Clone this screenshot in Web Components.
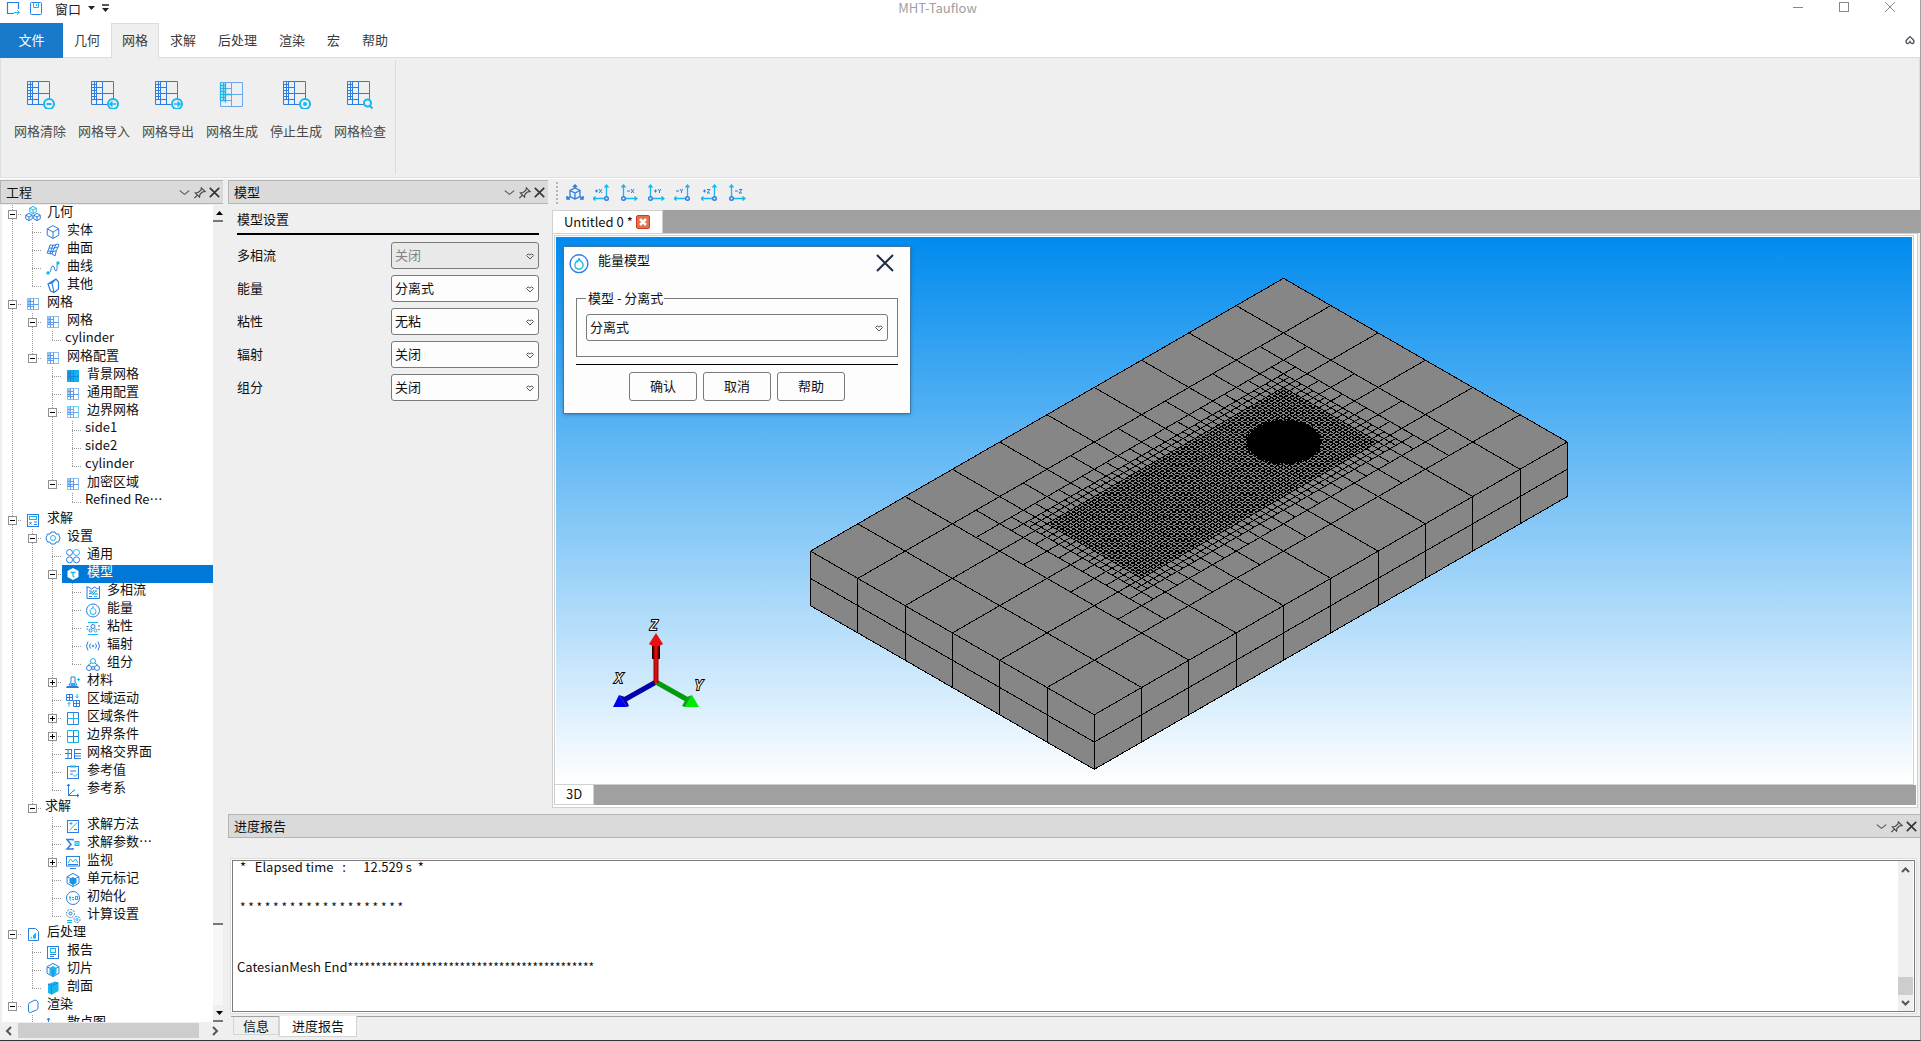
<!DOCTYPE html>
<html lang="zh-CN">
<head>
<meta charset="utf-8">
<title>MHT-Tauflow</title>
<style>
html,body{height:100%;margin:0}
body{font:13px/18px "Noto Sans CJK SC","Noto Sans",sans-serif;color:#111;background:#efefef;overflow:hidden}
</style>
</head>
<body>
<app-window>
  <title-bar slot="title" caption="MHT-Tauflow"></title-bar>
  <ribbon-tabs slot="tabs"></ribbon-tabs>
  <ribbon-bar slot="ribbon">
    <ribbon-tool icon="clear" label="网格清除"></ribbon-tool>
    <ribbon-tool icon="import" label="网格导入"></ribbon-tool>
    <ribbon-tool icon="export" label="网格导出"></ribbon-tool>
    <ribbon-tool icon="generate" label="网格生成"></ribbon-tool>
    <ribbon-tool icon="stop" label="停止生成"></ribbon-tool>
    <ribbon-tool icon="check" label="网格检查"></ribbon-tool>
  </ribbon-bar>

  <dock-panel slot="project" heading="工程">
    <tree-view>
      <tree-item label="几何" icon="cubes" open>
        <tree-item label="实体" icon="cube"></tree-item>
        <tree-item label="曲面" icon="surface"></tree-item>
        <tree-item label="曲线" icon="curve"></tree-item>
        <tree-item label="其他" icon="other"></tree-item>
      </tree-item>
      <tree-item label="网格" icon="mesh" open>
        <tree-item label="网格" icon="mesh" open>
          <tree-item label="cylinder"></tree-item>
        </tree-item>
        <tree-item label="网格配置" icon="mesh" open>
          <tree-item label="背景网格" icon="meshfull"></tree-item>
          <tree-item label="通用配置" icon="mesh"></tree-item>
          <tree-item label="边界网格" icon="meshedge" open>
            <tree-item label="side1"></tree-item>
            <tree-item label="side2"></tree-item>
            <tree-item label="cylinder"></tree-item>
          </tree-item>
          <tree-item label="加密区域" icon="mesh" open>
            <tree-item label="Refined Re…"></tree-item>
          </tree-item>
        </tree-item>
      </tree-item>
      <tree-item label="求解" icon="calc" open>
        <tree-item label="设置" icon="gear" open>
          <tree-item label="通用" icon="clover"></tree-item>
          <tree-item label="模型" icon="model" open selected>
            <tree-item label="多相流" icon="phase"></tree-item>
            <tree-item label="能量" icon="energy"></tree-item>
            <tree-item label="粘性" icon="viscous"></tree-item>
            <tree-item label="辐射" icon="radiation"></tree-item>
            <tree-item label="组分" icon="species"></tree-item>
          </tree-item>
          <tree-item label="材料" icon="material" closed></tree-item>
          <tree-item label="区域运动" icon="motion"></tree-item>
          <tree-item label="区域条件" icon="zone" closed></tree-item>
          <tree-item label="边界条件" icon="boundary" closed></tree-item>
          <tree-item label="网格交界面" icon="interface"></tree-item>
          <tree-item label="参考值" icon="refvalue"></tree-item>
          <tree-item label="参考系" icon="refframe"></tree-item>
        </tree-item>
        <tree-item label="求解" open>
          <tree-item label="求解方法" icon="method"></tree-item>
          <tree-item label="求解参数…" icon="sigma"></tree-item>
          <tree-item label="监视" icon="monitor" closed></tree-item>
          <tree-item label="单元标记" icon="cellmark"></tree-item>
          <tree-item label="初始化" icon="init"></tree-item>
          <tree-item label="计算设置" icon="gears"></tree-item>
        </tree-item>
      </tree-item>
      <tree-item label="后处理" icon="post" open>
        <tree-item label="报告" icon="report"></tree-item>
        <tree-item label="切片" icon="slice"></tree-item>
        <tree-item label="剖面" icon="section"></tree-item>
      </tree-item>
      <tree-item label="渲染" icon="render" open>
        <tree-item label="散点图" icon="refframe"></tree-item>
      </tree-item>
    </tree-view>
  </dock-panel>

  <dock-panel slot="settings" heading="模型">
    <model-settings>
      <form-row label="多相流" value="关闭" disabled></form-row>
      <form-row label="能量" value="分离式"></form-row>
      <form-row label="粘性" value="无粘"></form-row>
      <form-row label="辐射" value="关闭"></form-row>
      <form-row label="组分" value="关闭"></form-row>
    </model-settings>
  </dock-panel>

  <scene-view slot="scene">
    <mesh-scene></mesh-scene>
    <energy-dialog slot="window"></energy-dialog>
  </scene-view>

  <dock-panel slot="report" heading="进度报告">
    <log-view></log-view>
  </dock-panel>
</app-window>

<script>
const B = '#2b7de0', C = '#14b8ee';
const smallMesh = (o, i, f) => `<rect x="2.5" y="2.5" width="11" height="11" fill="${f}" stroke="${o}"/><path d="M8.5 2.5v11M8.5 8.5h5M2.5 10.5h6M5.5 2.5v11M2.5 5.5h6M2.5 8.5h6" stroke="${i}" fill="none"/><path d="M3 3h2v7H3z" fill="${i}" opacity=".6"/>`;
const bigMesh = (a, b) => `<path d="M.5 .5h22v23H.5zM11.5 .5v23M11.5 12.5h11" stroke="${a}"/><path d="M3.5 .5v18M5.5 .5v23M.5 3.5h5M.5 6.5h11M.5 9.5h5M.5 12.5h11M.5 15.5h5M.5 18.5h11" stroke="${b}"/>`;
const badge = p => `<circle cx="22" cy="23" r="5" fill="#efefef" stroke="${C}" stroke-width="2"/>${p}`;
const axis = (dir, lab) => {
  const x = dir > 0 ? 3.5 : 13.5, e = dir > 0 ? 17 : 0, s = dir;
  return `<path d="M${x} 13V1M${x - 2} 3.5L${x} 1l2 2.500M${x} 14.500H${e}M${e - 2.5 * s} 12.500L${e} 14.500l${-2.5 * s} 2" stroke="${C}" stroke-width="1.300"/><circle cx="${x}" cy="14.500" r="1.800" fill="#efefef" stroke="${B}" stroke-width="1.400"/>` + axisGlyph[lab](dir > 0 ? 7 : 2);
};
const axisGlyph = {
  '+X': x => `<path d="M${x} 7h3M${x + 1.5} 5.500v3M${x + 4} 5l3 4M${x + 7} 5l-3 4" stroke="${B}"/>`,
  '-X': x => `<path d="M${x} 7h3M${x + 4} 5l3 4M${x + 7} 5l-3 4" stroke="${B}"/>`,
  '+Y': x => `<path d="M${x} 7h3M${x + 1.5} 5.500v3M${x + 4} 5l1.500 2v2M${x + 7} 5l-1.500 2" stroke="${B}"/>`,
  '-Y': x => `<path d="M${x} 7h3M${x + 4} 5l1.500 2v2M${x + 7} 5l-1.500 2" stroke="${B}"/>`,
  '+Z': x => `<path d="M${x} 7h3M${x + 1.5} 5.500v3M${x + 4} 5.500h3l-3 3.500h3" stroke="${B}"/>`,
  '-Z': x => `<path d="M${x} 7h3M${x + 4} 5.500h3l-3 3.500h3" stroke="${B}"/>`
};
const iso = (x, y, r, c) => `<path d="M${x} ${y - r}l${r * .9} ${r / 2}v${r}l${-r * .9} ${r / 2}l${-r * .9} ${-r / 2}v${-r}zM${x - r * .9} ${y - r / 2}L${x} ${y}l${r * .9} ${-r / 2}M${x} ${y}v${r}" stroke="${c}"/>`;
const ICONS = {
  cubes: iso(8, 4, 3.6, C) + iso(4, 11, 3.6, B) + iso(12, 11, 3.6, B),
  cube: iso(8, 8, 6.4, B),
  surface: `<path d="M5 3q4 1 8-1l1 1q-3 5-4 11l-3-2-5-1q2-4 3-8zM4 6q4 1 9-1M3 9q4 1 8 0M8 3q-2 5-3 9M11 2.500Q8 7 7 12" stroke="${B}"/>`,
  curve: `<path d="M3 13c4 0 2-7 5-7 2 0 1 5 3 5s0-7 2-8" stroke="${B}"/><circle cx="3" cy="13" r="1.700" fill="${C}"/><circle cx="13" cy="3" r="1.700" fill="${C}"/>`,
  other: `<path d="M6 4l5-3 2.500 3v7L9 14.500 5.500 13 3 6zM3 6l4-1 2 9.500M7 5l4-4" stroke="${B}" stroke-width="1.200"/>`,
  mesh: smallMesh('#8fbdf2', '#5a9cea', '#fff'),
  meshedge: smallMesh('#6fd6f5', '#6fa9ec', '#fff'),
  meshfull: smallMesh('#0fa9ec', '#1685dc', '#0fb4ef'),
  calc: `<rect x="2.500" y="2.500" width="11" height="12" stroke="${B}"/><rect x="4.500" y="4.500" width="7" height="3" stroke="${C}"/><path d="M4.500 10l2 2.500M6.500 10l-2 2.500M9 10h3M9 12.500h3" stroke="${B}"/>`,
  gear: `<path d="M6 2h4l1 2h2.500L15 8l-1.500 4H11l-1 2H6l-1-2H2.500L1 8l1.500-4H5z" stroke="${B}"/><circle cx="8" cy="8" r="2.500" stroke="${C}"/>`,
  clover: `<circle cx="4.500" cy="4.500" r="3" stroke="${B}"/><circle cx="11.500" cy="4.500" r="3" stroke="${C}"/><circle cx="4.500" cy="11.800" r="3" stroke="${B}"/><circle cx="11.500" cy="11.800" r="3" stroke="${B}"/>`,
  model: `<path d="M8 2l5.500 3v6L8 14l-5.500-3V5z" fill="#fff"/><path d="M5.500 6.500h5M8 6.500v3q0 1.500 1.500 1.500" stroke="${C}" stroke-width="1.300"/>`,
  phase: `<path d="M2 2v12.500h12.500V2" stroke="${B}"/><path d="M2 4q2-2 3 0t3 0 3 0 3 0M4 7h3M10 7h2M4 10l3-1 2-3M8 10h5M4 12.500h3" stroke="${B}"/><path d="M5 8.500l3 2 3-4M9 12.500h3" stroke="${C}"/>`,
  energy: `<circle cx="8" cy="8.500" r="6.500" stroke="${B}"/><path d="M8 4.500c0 2 3 2.500 3 5a3 3 0 01-6 0c0-1.500 1-2 1.500-3 .5 1 1 .5 1.500-2z" stroke="${C}"/>`,
  viscous: `<path d="M3 2.500h10M3 14.500h10" stroke="${C}"/><circle cx="8" cy="6.500" r="2" stroke="${B}"/><circle cx="5.500" cy="10.500" r="1.500" stroke="${B}"/><circle cx="10.500" cy="10.500" r="1.500" stroke="${C}"/><path d="M1.500 6.500h2M13 6h2M1.500 9h1.500M13 9.500h1.500" stroke="${B}"/>`,
  radiation: `<path d="M3 3.500q-3 4.500 0 9M5.500 5.500q-2 2.500 0 5M13 3.500q3 4.500 0 9M10.500 5.500q2 2.500 0 5" stroke="${B}"/><circle cx="8" cy="8" r="1.200" fill="${C}"/>`,
  species: `<circle cx="8" cy="5" r="2.500" stroke="${C}"/><path d="M6 7L3 9.500M10 7l3 2.500" stroke="${B}"/><circle cx="4" cy="12" r="2.500" stroke="${B}"/><circle cx="12" cy="12" r="2.500" stroke="${B}"/><circle cx="8" cy="12" r="1.500" stroke="${B}"/>`,
  material: `<path d="M6 3h4v5l2 3H4l2-3z" stroke="${B}"/><path d="M2 12h11l1 2H1z" fill="${B}"/><path d="M6 9h4v3H6z" fill="${C}"/><path d="M12 5.500h3M13.500 4v3" stroke="${C}"/>`,
  motion: `<path d="M1.500 2.500h6v6h-6zM4.500 2.500v6M1.500 5.500h6M8.500 8.500h6v6h-6zM11.500 8.500v6M8.500 11.500h6" stroke="${B}"/><path d="M12 2v4M10.500 4.500L12 6l1.500-1.500M4 14.500v-4M2.500 12L4 10.500 5.500 12" stroke="${C}"/>`,
  zone: `<path d="M2.500 2.500h11v12h-11z" stroke="${B}"/><path d="M8.500 2.500v12M2.500 8.500h11" stroke="${C}"/>`,
  boundary: `<path d="M2.500 2.500h11v12h-11z" stroke="${C}"/><path d="M8.500 2.500v12M2.500 8.500h11" stroke="${B}"/>`,
  interface: `<path d="M0 3.500h7M0 7.500h7M0 12.500h7M3 3v10M6.500 3v10M9.500 3v10M9.500 3.500H16M9.500 7.500H16M9.500 12.500H16M9.500 10H16" stroke="${B}"/>`,
  refvalue: `<rect x="2.500" y="2.500" width="11" height="12" stroke="${B}"/><path d="M5 2.500h6" stroke="${C}" stroke-width="2"/><path d="M5 7h6M5 10h3" stroke="${B}"/><path d="M8.500 11l1.500 1.500 3-3" stroke="${C}"/>`,
  refframe: `<path d="M3.500 2v11.500H14M2 4l1.500-2L5 4M12 12l2 1.500-2 1.500M3.500 13.500L8 9" stroke="${B}"/><circle cx="9" cy="8.500" r="1" fill="${C}"/>`,
  method: `<rect x="2.500" y="2.500" width="11" height="12" stroke="${B}"/><path d="M12 4.500L4.500 12.500M4.500 5.500h3M6 4v3" stroke="${C}"/><path d="M9 11.500h3" stroke="${B}"/>`,
  sigma: `<path d="M8 4.500V3.500H2l4 5-4 4.500h6v-1" stroke="${B}" stroke-width="1.500"/><path d="M10 5.500h4v4h-4zM10 5.500l4 4M14 5.500l-4 4" stroke="${C}"/>`,
  monitor: `<rect x="1.500" y="2.500" width="13" height="9.500" stroke="${B}"/><path d="M3 9l2.500-4L8 8l2.500-3L13 9" stroke="${C}"/><path d="M5 14.500h6M3 10.500h10" stroke="${B}"/>`,
  cellmark: iso(8, 8, 6.6, B) + `<path d="M8 5l3.500 2v4L8 13l-3.500-2V7z" fill="#1596e6"/>`,
  init: `<circle cx="8" cy="8" r="6.500" stroke="${B}"/><path d="M5 6v4h1M4 7.500h2M7 7.500h2M7 9.500h2" stroke="${C}"/><rect x="10.500" y="6.500" width="2" height="3" stroke="${C}"/>`,
  gears: `<circle cx="5.500" cy="5.500" r="4" stroke="${B}" stroke-dasharray="2 1"/><circle cx="5.500" cy="5.500" r="1.500" stroke="${B}"/><circle cx="12" cy="11.500" r="3" stroke="${B}" stroke-dasharray="2 1"/><circle cx="12" cy="11.500" r="1" stroke="${C}"/><path d="M2 12.500h5M2 14.500h5" stroke="${C}"/>`,
  post: `<path d="M3.500 2.500h7l3 3v9h-10z" stroke="${B}"/><path d="M5 12.500l6-6v6z" fill="${C}"/><path d="M7.500 6.500v6" stroke="#fff"/>`,
  report: `<rect x="2.500" y="2.500" width="11" height="12" stroke="${B}"/><rect x="5.500" y="4.500" width="5" height="4" stroke="${C}"/><path d="M5 10.500h6M5 12.500h4" stroke="${B}"/>`,
  slice: iso(8, 8, 6.6, B) + `<path d="M4.500 6L8 8v6l-3.500-2zM8 8l3.500-2v6L8 14zM8 4l3.500 2L8 8 4.500 6z" fill="${C}"/><path d="M8 8v6" stroke="${B}"/>`,
  section: `<path d="M3 4l7-2.500 3.500 1V11L7 14.500 3 13z" fill="${C}"/><path d="M3 4l3.500 1.500L13 3M6.500 5.500v9" stroke="${B}"/>`,
  render: `<path d="M3.500 6.500Q3.500 5 5 4.500l5-2.500q1 0 2 1l1 1v6q0 1.500-1.500 2l-6 2.500q-2 0-2-1.500z" stroke="${B}"/>`,
  qnew: `<path d="M9 13.500H2.500v-11h11V9" stroke="${B}" stroke-width="1.200"/><path d="M9 12.500h5M12 10.500l2.500 2-2.500 2" stroke="${C}"/>`,
  qsave: `<rect x="2.500" y="2.500" width="11" height="12" stroke="${B}" rx="1"/><path d="M5.500 2.500v5h5v-5M8.500 4v2" stroke="${C}"/>`,
  isoview: `<path d="M9 4l5 2.500v6L9 15l-5-2.500v-6zM4 6.500L9 9l5-2.500M9 9v6" stroke="${B}" stroke-width="1.300"/><path d="M9 4V1M7 3l2-2 2 2M4 12.500l-3 2.500M1 12v3h3M14 12.500l3 2.500M17 12v3h-3" stroke="${B}" stroke-width="1.500"/>`,
  vpx: axis(-1, '+X'), vmx: axis(1, '-X'), vpy: axis(1, '+Y'), vmy: axis(-1, '-Y'), vpz: axis(-1, '+Z'), vmz: axis(1, '-Z'),
  clear: bigMesh(B, B) + badge(`<path d="M19.500 23h5" stroke="${C}" stroke-width="2"/>`),
  import: bigMesh(B, B) + badge(`<path d="M19 23h6M21.500 20.500L19 23l2.500 2.500" stroke="${C}" stroke-width="1.500"/>`),
  export: bigMesh(B, B) + badge(`<path d="M19 23h6M22.500 20.500L25 23l-2.500 2.500" stroke="${C}" stroke-width="1.500"/>`),
  stop: bigMesh(B, B) + badge(`<circle cx="22" cy="23" r="2" fill="${C}"/>`),
  generate: `<g transform="translate(1 1)"><path d="M11.500 .5h11v24H.5V.5zM11.500 .5v24M11.500 12.500h11M5.500 6.500h6M5.500 18.500h6" stroke="#6aa7ee"/><path d="M3.500 .5v18M5.500 .5v20M.5 .5v18M.5 3.500h5M.5 6.500h6M.5 9.500h5M.5 12.500h11M.5 15.500h5M.5 18.500h5" stroke="${C}" stroke-width="1.300"/></g>`,
  check: bigMesh(B, B) + `<circle cx="20.500" cy="22" r="3.500" fill="#efefef" stroke="${C}" stroke-width="2"/><path d="M23 25l2.500 2.500" stroke="${C}" stroke-width="2"/>`,
  down: `<path d="M3 6l5 4 5-4" stroke="#555" stroke-width="1.200"/>`,
  pin: `<path d="M10 3l4 4-3 .5-2.500 2.500-.5 3-4.500-4.500 3-.5L9.500 5.500zM6 10.500L2.500 14" stroke="#444" stroke-width="1.200"/>`,
  close: `<path d="M3 3l10 10M13 3L3 13" stroke="#333" stroke-width="1.700"/>`,
  heart: `<path d="M4.500 7.500Q6 4.500 8 7q2-2.500 3.500 .5L8 11z" stroke="#555b66"/>`
};
const svg = (n, w = 16, vb = 16) => `<svg width="${w}" height="${w}" viewBox="0 0 ${vb} ${vb}" fill="none" aria-hidden="true">${ICONS[n]}</svg>`;

const define = (name, render) => customElements.define(name, class extends HTMLElement {
  connectedCallback() {
    if (this.shadowRoot) return;
    const root = this.attachShadow({ mode: 'open' });
    const t = document.createElement('template');
    t.innerHTML = `<style>:host,*{box-sizing:border-box}button,select{font:inherit;color:inherit;margin:0}svg{display:block;flex:none}.bare{border:0;padding:0;background:none;display:grid;place-items:center}</style>` + render(this);
    root.append(t.content.cloneNode(true));
  }
});

define('app-window', () => `<style>
:host{display:flex;flex-direction:column;height:100vh;border-right:1px solid #a0a0a0;border-bottom:1px solid #2b333b;background:#efefef}
.work{flex:1;min-height:0;display:flex;gap:5px;padding-top:1px;border-top:1px solid #fff}
.left{width:223px;display:flex;flex:none}
.main{flex:1;min-width:0;display:flex;flex-direction:column;gap:6px}
.top{flex:1;min-height:0;display:flex;gap:4px}
.set{width:320px;flex:none;display:flex}
::slotted([slot=scene]),::slotted([slot=project]),::slotted([slot=settings]){flex:1;min-width:0}
</style>
<slot name="title"></slot><slot name="tabs"></slot><slot name="ribbon"></slot>
<div class="work"><div class="left"><slot name="project"></slot></div>
<div class="main"><div class="top"><div class="set"><slot name="settings"></slot></div><slot name="scene"></slot></div><slot name="report"></slot></div></div>`);

define('title-bar', el => `<style>
:host{display:flex;height:23px;background:#fff}
.side{flex:1;display:flex;align-items:flex-start}
.quick{padding-left:5px;gap:7px}
.quick button{height:16px}
.menu{display:flex;align-items:center;gap:7px;padding-left:4px;color:#222}
h1{margin:0 28px 0 0;font-size:13px;font-weight:400;line-height:16px;color:#a0a0a0}
.win{justify-content:flex-end;padding-right:22px;gap:30px}
</style>
<div class="side quick"><button class="bare" aria-label="新建">${svg('qnew')}</button><button class="bare" aria-label="保存">${svg('qsave')}</button><div class="menu"><button class="bare">窗口</button><svg width="7" height="4"><path d="M0 0h7L3.500 4z" fill="#222"/></svg><svg width="7" height="8"><path d="M0 1h7" stroke="#222" stroke-width="1.500"/><path d="M0 4h7L3.500 8z" fill="#222"/></svg></div></div>
<h1>${el.getAttribute('caption')}</h1>
<div class="side win"><button class="bare" aria-label="最小化"><svg width="16" height="15"><path d="M3 7.500h10" stroke="#888"/></svg></button><button class="bare" aria-label="最大化"><svg width="16" height="15" fill="none"><rect x="3.500" y="2.500" width="9" height="9" stroke="#888"/></svg></button><button class="bare" aria-label="关闭"><svg width="16" height="15"><path d="M3 2l10 10M13 2L3 12" stroke="#888"/></svg></button></div>`);

define('ribbon-tabs', () => `<style>
:host{display:flex;height:35px;background:linear-gradient(#dcdcdc,#dcdcdc) bottom/100% 1px no-repeat #fff;color:#3b3b3b}
button{border:1px solid transparent;border-bottom:0;background:none;padding:0 10px 3px;height:35px}
.file{background:#1979ca;color:#fff;width:63px;padding:0 0 2px;border:0}
.on{background:#efefef;border-color:#dcdcdc}
.fold{margin-left:auto;padding:0 1px 3px}
</style><button class="file">文件</button>${['几何', '网格', '求解', '后处理', '渲染', '宏', '帮助'].map(t => `<button${t === '网格' ? ' class="on"' : ''}>${t}</button>`).join('')}<button class="fold" aria-label="折叠"><svg width="16" height="16" fill="none"><path d="M5 11.500Q3 9.500 5 7.500L8 4.500l3 3q2 2 0 4Q9 12 8 9.500 7 12 5 11.500z" stroke="#444b57" stroke-width="1.200"/></svg></button>`);

define('ribbon-bar', () => `<style>
:host{display:flex;height:120px;border:1px solid #dfdfdf;border-top:0;padding:2px 0 3px 7px}
div{display:flex;padding-right:3px;border-right:1px solid #dcdcdc}
</style><div><slot></slot></div>`);

define('ribbon-tool', el => `<style>
:host{display:block;width:64px}
button{width:100%;border:0;background:none;padding:21px 0 0 0;display:flex;flex-direction:column;align-items:center;color:#4a4a4a;gap:13px;white-space:nowrap}
svg{margin-left:2px}
</style><button>${svg(el.getAttribute('icon'), 28, 28)}<span>${el.getAttribute('label')}</span></button>`);

define('dock-panel', el => `<style>
:host{display:flex;flex-direction:column;min-width:0}
header{flex:none;height:24px;display:flex;align-items:center;background:#dadada;border:1px solid #b4b4b4;border-right:0;padding:0 1px 0 5px}
h2{flex:1;margin:0;font-size:13px;font-weight:400;line-height:20px;padding-bottom:1px}
button{width:15px;height:20px}
svg{width:15px;height:15px}
</style><header><h2>${el.getAttribute('heading')}</h2><button class="bare" aria-label="菜单">${svg('down')}</button><button class="bare" aria-label="固定">${svg('pin')}</button><button class="bare" aria-label="关闭">${svg('close')}</button></header><slot></slot>`);

define('tree-view', () => `<style>
:host{flex:1;min-height:0;display:flex;flex-direction:column;padding:1px 0 2px 2px}
.body{flex:1;min-height:0;display:flex}
.list{flex:1;background:#fff;overflow:hidden}
.v{width:10px;display:flex;flex-direction:column;background:repeating-conic-gradient(#fff 0 25%,#eee 0 50%) 0/2px 2px}
.v i,.v b{background:#efefef;border-bottom:2px solid #777;display:flex;justify-content:flex-end;align-items:center;overflow:hidden}
.v b{height:17px;flex:none}.v i{flex:1}.v u{height:80px}
.h{height:16px;flex:none;display:flex;align-items:center;padding-top:1px}
.h span{flex:1;display:flex;height:15px}
.h span b{width:96%;background:#cdcdcd;min-width:0}
</style><div class="body"><div class="list" role="tree"><slot></slot></div>
<div class="v"><b><svg width="7" height="4"><path d="M0 4h7L3.500 0z"/></svg></b><i></i><u></u><b><svg width="7" height="4"><path d="M0 0h7L3.500 4z"/></svg></b></div></div>
<div class="h"><svg width="16" height="14" fill="none"><path d="M9 3L5 7l4 4" stroke="#555" stroke-width="2"/></svg><span><b></b></span><svg width="16" height="14" fill="none"><path d="M6 3l4 4-4 4" stroke="#555" stroke-width="2"/></svg></div>`);

define('tree-item', el => {
  const a = n => el.getAttribute(n), has = n => el.hasAttribute(n);
  const ex = has('open') ? '<path d="M2 4.500h5" stroke="#000"/>' : '<path d="M2 4.500h5M4.500 2v5" stroke="#000"/>';
  return `<style>
:host{display:block;background:repeating-linear-gradient(#999 0 1px,transparent 0 2px) 10px 0/1px 100% no-repeat}
:host(:last-child){background-size:1px 9px}
.row{display:flex;height:18px}
.join{width:20px;flex:none;display:flex;align-items:center;background:repeating-linear-gradient(90deg,#999 0 1px,transparent 0 2px) 10px 9px/10px 1px no-repeat}
.join button{width:9px;height:9px;margin-left:6px;background:#fff}
.cell{flex:1;min-width:0;display:flex}
:host([selected]) .cell{background:#0078d7;color:#fff}
.ico{width:22px;display:grid;place-items:center;flex:none}
.txt{line-height:12px;padding-left:3px;white-space:nowrap}
.kids{padding-left:20px}
</style><div class="row" role="treeitem"><span class="join">${has('open') || has('closed') ? `<button class="bare" aria-label="展开"><svg width="9" height="9" fill="none"><rect x=".5" y=".5" width="8" height="8" fill="#fff" stroke="#919191"/>${ex}</svg></button>` : ''}</span><span class="cell">${a('icon') ? `<span class="ico">${svg(a('icon'))}</span>` : ''}<span class="txt">${a('label')}</span></span></div><div class="kids"><slot></slot></div>`;
});

const combo = (id, value, dis) => `<span class="combo"><select id="${id}"${dis ? ' disabled' : ''} aria-label="${value}"><option>${value}</option></select>${svg('heart')}</span>`;
const comboCss = `.combo{display:grid;align-items:center}
.combo>*{grid-area:1/1}.combo svg{justify-self:end;margin-right:1px;pointer-events:none}
select{appearance:none;width:100%;height:27px;border:1px solid #7a7a7a;border-radius:3px;background:#fdfdfd;padding:0 3px 2px;opacity:1}
select:disabled{background:#e9e9e9;color:#838383}`;

define('model-settings', () => `<style>
:host{display:flex;flex-direction:column;padding:6px 9px 0 9px}
h3{margin:0 0 7px;font-size:13px;font-weight:400;line-height:18px;padding-bottom:5px;border-bottom:2px solid #000}
.rows{display:flex;flex-direction:column;gap:6px}
</style><h3>模型设置</h3><div class="rows"><slot></slot></div>`);

define('form-row', el => `<style>
:host{display:flex;align-items:center}
label{flex:1;padding-bottom:2px}.combo{width:148px}${comboCss}
</style><label for="s">${el.getAttribute('label')}</label>${combo('s', el.getAttribute('value'), el.hasAttribute('disabled'))}`);

define('scene-view', () => `<style>
:host{display:flex;flex-direction:column;min-height:0}
.tools{height:30px;flex:none;display:flex;align-items:center;gap:9px;padding:0 0 4px 4px}
.grip{width:2px;height:22px;margin-right:-1px;background:repeating-linear-gradient(#b5b5b5 0 2px,transparent 0 4px)}
.tools .bare{width:18px;height:18px}
.tabs{height:23px;flex:none;background:#a0a0a0;display:flex}
.tab{background:#fff;border:solid #d0d0d0;border-width:1px 1px 0;width:111px;padding-left:11px;display:flex;align-items:center;gap:3px}
.tab button{width:14px;height:14px;background:#e2714b;border:1px solid #d43a26;border-radius:2px}
.frame{flex:1;min-height:0;margin-right:2px;border:1px solid #d0d0d0;background:#fff;padding:1px 1px 2px;display:flex;flex-direction:column}
.inner{flex:1;min-height:0;margin-right:2px;border:1px solid #d0d0d0;padding:1px 1px 0;display:flex}
.canvas{flex:1;position:relative;background:linear-gradient(#008bee,#fff);overflow:hidden}
.win{position:absolute;left:8px;top:10px}
.foot{height:20px;flex:none;display:flex;background:#a0a0a0}
.foot button{width:40px;border:solid #d0d0d0;border-width:0 1px 1px;background:#fff;padding:0 10px 2px 11px;text-align:left}
</style>
<div class="tools"><span class="grip"></span>${['isoview', 'vpx', 'vmx', 'vpy', 'vmy', 'vpz', 'vmz'].map(n => `<button class="bare" aria-label="${n}">${svg(n, 18, 18)}</button>`).join('')}</div>
<div class="tabs"><div class="tab"><span>Untitled 0 *</span><button class="bare" aria-label="关闭"><svg width="8" height="8"><path d="M1 1l6 6M7 1L1 7" stroke="#fff" stroke-width="2.500"/></svg></button></div></div>
<div class="frame"><div class="inner"><div class="canvas"><slot></slot><div class="win"><slot name="window"></slot></div></div></div><div class="foot"><button>3D</button></div></div>`);

define('mesh-scene', () => {
  const P = (u, v, w = 0) => `${(727.5 + (v - u) * 47.3).toFixed(2)} ${(41.3 + (u + v + w) * 27.28).toFixed(2)}`;
  let d = '';
  const line = (a, b) => { d += `M${a}L${b}`; };
  const grid = (u0, u1, v0, v1, s) => {
    for (let u = u0; u <= u1 + 1e-6; u += s) line(P(u, v0), P(u, v1));
    for (let v = v0; v <= v1 + 1e-6; v += s) line(P(u0, v), P(u1, v));
  };
  grid(0, 10, 0, 6, 1);
  grid(1, 8, 1, 5, 1 / 2);
  grid(1.5, 7.5, 1.5, 4.5, 1 / 4);
  grid(1.75, 7.25, 1.75, 4.25, 1 / 8);
  grid(2, 7, 2, 4, 1 / 16);
  for (let v = 0; v <= 6; v++) line(P(10, v), P(10, v, 2));
  for (let u = 0; u < 10; u++) line(P(u, 6), P(u, 6, 2));
  for (const w of [1, 2]) { line(P(10, 0, w), P(10, 6, w)); line(P(10, 6, w), P(0, 6, w)); }
  return `<style>:host{display:block;height:100%}svg{width:100%;height:100%}text{font:italic 14px "Noto Sans",sans-serif}</style>
<svg viewBox="0 0 1356 547" fill="none" role="img" aria-label="网格三维视图"><defs>
<linearGradient id="r"><stop stop-color="#8a0000"/><stop offset=".5" stop-color="#f01010"/><stop offset="1" stop-color="#8a0000"/></linearGradient></defs>
<g shape-rendering="crispEdges"><path fill="#868686" d="M${P(0, 0)}L${P(0, 6)}L${P(0, 6, 2)}L${P(10, 6, 2)}L${P(10, 0, 2)}L${P(10, 0)}z"/>
<path stroke="#000" d="${d}"/><ellipse cx="728" cy="205" rx="37" ry="21.500" fill="#000"/><ellipse cx="728" cy="205" rx="37" ry="21.500" stroke="#000" stroke-dasharray="2 2" stroke-width="3"/></g>
<g><path d="M100 445L68 463" stroke="#0000a8" stroke-width="5"/><path d="M57 470l6-12 8 12z" fill="#0000f0"/><path d="M71 470l-8-12 6 2 4 9z" fill="#0000b0"/>
<path d="M100 445l32 18" stroke="#009c0c" stroke-width="5"/><path d="M143 470l-14 0 7-12z" fill="#00e800"/><path d="M129 470l7-12-5 2-5 9z" fill="#00a808"/>
<path d="M96 408h8v14h-8z" fill="#300"/><path d="M97.500 408h5v38h-5z" fill="url(#r)"/><path d="M100 396l7 11q-7 5-14 0z" fill="#e81010"/></g>
<g fill="#fff" stroke="#000" stroke-width="2" paint-order="stroke"><text x="94" y="393">Z</text><text x="59" y="446">X</text><text x="139" y="453">Y</text></g></svg>`;
});

define('energy-dialog', () => `<style>
:host{display:block;width:346px;background:#fdfdfd;box-shadow:0 0 0 1px #3c78a8,0 1px 4px #0006;padding:5px 12px 12px}
header{display:flex;align-items:center;height:22px}
header svg{margin-left:-8px}
h2{flex:1;margin:0;padding:0 0 7px 8px;font-size:13px;font-weight:400;line-height:15px}
header button{width:24px;height:22px}
header button svg{margin:0 2px 0 0}
fieldset{margin:15px 0 7px;min-width:0;border:1px solid #7a7a7a;padding:6px 9px 15px}
legend{padding:0 1px 1px 2px;line-height:18px}
.acts{border-top:1px solid #000;padding-top:7px;display:flex;justify-content:center;gap:6px}
.acts button{width:68px;height:29px;border:1px solid #7a7a7a;border-radius:3px;background:#fdfdfd;padding:0 0 1px}
${comboCss}
</style><header>${svg('energy', 22, 16)}<h2>能量模型</h2><button class="bare" aria-label="关闭"><svg width="18" height="18"><path d="M1 1l16 16M17 1L1 17" stroke="#1b2c44" stroke-width="2"/></svg></button></header>
<fieldset><legend>模型 - 分离式</legend>${combo('e', '分离式')}</fieldset>
<div class="acts"><button>确认</button><button>取消</button><button>帮助</button></div>`);

define('log-view', () => `<style>
:host{display:block;padding:20px 0 1px}
.box{margin:0 3px 0 2px;border:1px solid #dcdcdc;background:#fff;padding:1px}
.in{border:1px solid #7a7a7a;height:152px;display:flex}
.log{flex:1;min-width:0;display:flex;flex-direction:column;gap:4px;padding-left:4px}
pre{margin:0;font:inherit;line-height:20px}
pre:first-child{line-height:12px}
i{font-style:normal;font-size:12px}
.sb{width:15px;background:#efefef;display:flex;flex-direction:column;align-items:center;justify-content:space-between;margin-right:1px}
.sb b{width:15px;height:18px;background:#cdcdcd;margin-top:auto}
.tabs{display:flex;align-items:flex-start;margin:2px 0 1px 3px;height:22px;border-top:1px solid #a0a0a0;padding-left:2px}
.tabs button{border:1px solid #d4d4d4;border-top:0;background:#efefef;height:18px;width:46px;padding:0;line-height:16px}
.tabs .on{background:#fff;width:78px;height:21px;margin-top:-1px;line-height:20px}
</style><div class="box"><div class="in"><div class="log" role="log"><pre> *   Elapsed time   :      12.529 s  *</pre><pre>
 
 <i>${Array(20).fill('*').join(' ')}</i>


CatesianMesh End<i>${'*'.repeat(44)}</i></pre></div><div class="sb"><svg width="15" height="18" fill="none"><path d="M4 11l3.500-3.500L11 11" stroke="#555" stroke-width="2"/></svg><b></b><svg width="15" height="16" fill="none"><path d="M4 6l3.500 3.500L11 6" stroke="#555" stroke-width="2"/></svg></div></div></div>
<div class="tabs"><button>信息</button><button class="on">进度报告</button></div>`);
</script>
</body>
</html>
